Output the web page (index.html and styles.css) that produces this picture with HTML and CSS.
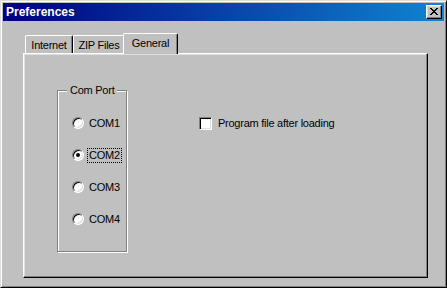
FILE: index.html
```html
<!DOCTYPE html>
<html>
<head>
  <title>Preferences</title>
  <link rel="stylesheet" href="styles.css">
</head>
<body>
  <div class="window">
    <div class="titlebar">
      <span class="title">Preferences</span>
      <button class="close-btn">
        <svg width="8" height="7" viewBox="0 0 8 7" shape-rendering="crispEdges">
          <path d="M0 0h2v1H0zM6 0h2v1H6zM1 1h2v1H1zM5 1h2v1H5zM2 2h4v1H2zM3 3h2v1H3zM2 4h4v1H2zM1 5h2v1H1zM5 5h2v1H5zM0 6h2v1H0zM6 6h2v1H6z" fill="#000"/>
        </svg>
      </button>
    </div>

    <div class="content">
      <div class="tabs">
        <div class="tab tab-internet">Internet</div>
        <div class="tab tab-zip">ZIP Files</div>
        <div class="tab tab-general active">General</div>
      </div>

      <div class="panel">
        <fieldset class="groupbox">
          <legend>Com Port</legend>
          <div class="radio-list">
            <div class="radio-row"><span class="radio"></span><span class="label">COM1</span></div>
            <div class="radio-row"><span class="radio checked"></span><span class="label focused">COM2</span></div>
            <div class="radio-row"><span class="radio"></span><span class="label">COM3</span></div>
            <div class="radio-row"><span class="radio"></span><span class="label">COM4</span></div>
          </div>
        </fieldset>

        <div class="check-row">
          <span class="checkbox"></span>
          <span class="label">Program file after loading</span>
        </div>
      </div>
    </div>
  </div>
</body>
</html>
```

FILE: styles.css
```css
body {
  margin: 0;
  font-family: "Liberation Sans", Arial, sans-serif;
  font-size: 11px;
  letter-spacing: -0.25px;
  color: #000;
  background-color: #c0c0c0;
}
.window {
  width: 447px;
  height: 288px;
  box-sizing: border-box;
  display: flex;
  flex-direction: column;
  padding: 2px;
  background-color: #c0c0c0;
  border: 1px solid;
  border-color: #dfdfdf #000 #000 #dfdfdf;
  box-shadow: inset 1px 1px 0 #fff, inset -1px -1px 0 #808080;
}
.titlebar {
  height: 18px;
  flex-shrink: 0;
  display: flex;
  align-items: center;
  justify-content: space-between;
  padding: 0 2px 0 3px;
  background: linear-gradient(to right, #000080, #1084d0);
}
.title {
  color: white;
  font-weight: bold;
  font-size: 12px;
  letter-spacing: 0;
}
.close-btn {
  width: 16px;
  height: 14px;
  box-sizing: border-box;
  padding: 0 1px 1px 0;
  display: flex;
  align-items: center;
  justify-content: center;
  background-color: #c0c0c0;
  border: 1px solid;
  border-color: #fff #000 #000 #fff;
  box-shadow: inset -1px -1px 0 #808080, inset 1px 1px 0 #dfdfdf;
}
.content {
  flex: 1;
  display: flex;
  flex-direction: column;
  padding: 12px 16px 7px 20px;
}
.tabs {
  height: 20px;
  display: flex;
  align-items: flex-end;
  padding-left: 2px;
}
.tab {
  height: 18px;
  box-sizing: border-box;
  display: flex;
  align-items: center;
  justify-content: center;
  padding-top: 1px;
  background-color: #c0c0c0;
  border-top: 1px solid #fff;
  border-left: 1px solid #fff;
  border-right: 1px solid #000;
  border-radius: 2px 2px 0 0;
  box-shadow: inset -1px 0 0 #808080;
}
.tab-internet { width: 48px; }
.tab-zip { width: 52px; }
.tab-general { width: 55px; }
.tab.active {
  height: 21px;
  margin: 0 0 -1px -2px;
  padding-bottom: 3px;
  position: relative;
  z-index: 1;
}
.panel {
  flex: 1;
  display: flex;
  align-items: flex-start;
  padding: 30px 0 0 33px;
  border: 1px solid;
  border-color: #fff #000 #000 #fff;
  box-shadow: inset -1px -1px 0 #808080, inset 1px 1px 0 #dfdfdf;
}
.groupbox {
  width: 70px;
  height: 168px;
  box-sizing: border-box;
  margin: 0;
  padding: 0;
  min-width: 0;
  border: 1px solid #808080;
  box-shadow: 1px 1px 0 #fff, inset 1px 1px 0 #fff;
}
.groupbox legend {
  margin-left: 9px;
  padding: 0 3px;
  line-height: 13px;
  background-color: #c0c0c0;
}
.radio-list {
  display: flex;
  flex-direction: column;
  gap: 20px;
  padding: 20px 0 0 14px;
}
.radio-row {
  height: 12px;
  display: flex;
  align-items: center;
  gap: 3px;
}
.radio {
  width: 12px;
  height: 12px;
  box-sizing: border-box;
  flex-shrink: 0;
  display: flex;
  align-items: center;
  justify-content: center;
  border-radius: 50%;
  background-color: #fff;
  border: 1px solid;
  border-color: #808080 #fff #fff #808080;
  box-shadow: inset 1px 1px 0 #000, inset -1px -1px 0 #dfdfdf;
}
.radio.checked::after {
  content: "";
  width: 4px;
  height: 4px;
  border-radius: 50%;
  background-color: #000;
}
.label {
  padding: 0 1px;
  line-height: 13px;
  border: 1px solid transparent;
}
.label.focused {
  border: 1px dotted #000;
}
.check-row {
  margin: 33px 0 0 72px;
  height: 13px;
  display: flex;
  align-items: center;
  gap: 4px;
}
.checkbox {
  width: 13px;
  height: 13px;
  box-sizing: border-box;
  flex-shrink: 0;
  background-color: #fff;
  border: 1px solid;
  border-color: #808080 #fff #fff #808080;
  box-shadow: inset 1px 1px 0 #000, inset -1px -1px 0 #dfdfdf;
}
```
